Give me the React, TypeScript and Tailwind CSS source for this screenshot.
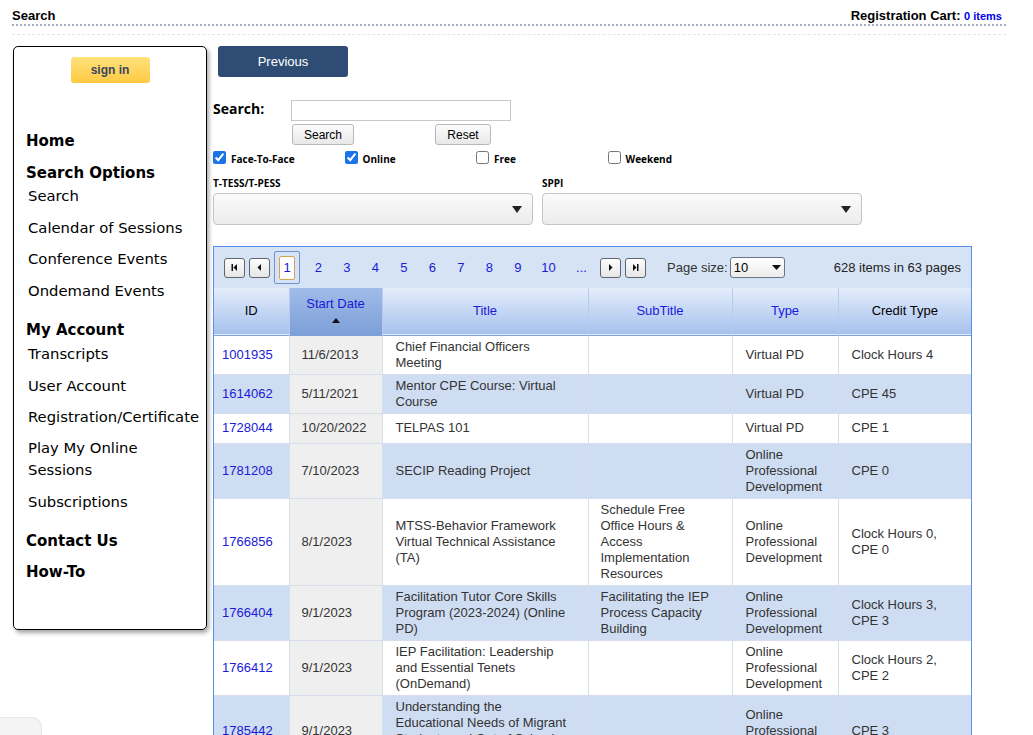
const rows = [
  { id: "1001935", date: "11/6/2013", title: "Chief Financial Officers Meeting", sub: "", type: "Virtual PD", credit: "Clock Hours 4" },
  { id: "1614062", date: "5/11/2021", title: "Mentor CPE Course: Virtual Course", sub: "", type: "Virtual PD", credit: "CPE 45" },
  { id: "1728044", date: "10/20/2022", title: "TELPAS 101", sub: "", type: "Virtual PD", credit: "CPE 1" },
  { id: "1781208", date: "7/10/2023", title: "SECIP Reading Project", sub: "", type: "Online Professional Development", credit: "CPE 0" },
  { id: "1766856", date: "8/1/2023", title: "MTSS-Behavior Framework Virtual Technical Assistance (TA)", sub: "Schedule Free Office Hours & Access Implementation Resources", type: "Online Professional Development", credit: "Clock Hours 0, CPE 0" },
  { id: "1766404", date: "9/1/2023", title: "Facilitation Tutor Core Skills Program (2023-2024) (Online PD)", sub: "Facilitating the IEP Process Capacity Building", type: "Online Professional Development", credit: "Clock Hours 3, CPE 3" },
  { id: "1766412", date: "9/1/2023", title: "IEP Facilitation: Leadership and Essential Tenets (OnDemand)", sub: "", type: "Online Professional Development", credit: "Clock Hours 2, CPE 2" },
  { id: "1785442", date: "9/1/2023", title: "Understanding the Educational Needs of Migrant Students and Out of School Youth (OSY)", sub: "", type: "Online Professional Development", credit: "CPE 3" },
];

function PagerBtn({ kind }: { kind: "first" | "prev" | "next" | "last" }) {
  return (
    <div className="w-[21px] h-[20px] border border-[#5d6670] rounded-[3px] bg-gradient-to-b from-[#fdfdfd] to-[#e6e6e6] flex items-center justify-center">
      <svg width="9" height="9" viewBox="0 0 9 9">
        {kind === "first" && (<><rect x="1.5" y="1" width="1.5" height="7" fill="#111" /><path d="M7 1 L3.5 4.5 L7 8 Z" fill="#111" /></>)}
        {kind === "prev" && <path d="M6 1 L2.5 4.5 L6 8 Z" fill="#111" />}
        {kind === "next" && <path d="M3 1 L6.5 4.5 L3 8 Z" fill="#111" />}
        {kind === "last" && (<><path d="M2 1 L5.5 4.5 L2 8 Z" fill="#111" /><rect x="6" y="1" width="1.5" height="7" fill="#111" /></>)}
      </svg>
    </div>
  );
}

function FakeSelect({ w }: { w: string }) {
  return (
    <div className={`${w} h-[32px] border border-[#c4c4c4] rounded-[4px] bg-gradient-to-b from-[#fbfbfb] to-[#ececec] flex items-center justify-end pr-[10px]`}>
      <svg width="10" height="7" viewBox="0 0 10 7"><path d="M0 0 H10 L5 7 Z" fill="#222" /></svg>
    </div>
  );
}

export default function App() {
  const arial = { fontFamily: '"Liberation Sans", Arial, sans-serif' };
  return (
    <div className="relative min-h-screen bg-white text-black" style={arial}>
      {/* header */}
      <div className="ml-[12px] w-[995px] pt-[7px]">
        <div className="flex justify-between items-end h-[15px] pr-[5px]">
          <span className="text-[13px] font-bold leading-none">Search</span>
          <span className="text-[13px] font-bold leading-none">
            Registration Cart: <span className="text-[11px] text-[#0000ee]">0 items</span>
          </span>
        </div>
        <div className="mt-[2px] border-t-2 border-dotted border-[#a3acbf] w-[994px]" />
        <div className="mt-[8px] border-t border-dashed border-[#e2e5ea] w-[994px]" />
      </div>

      <div className="flex ml-[13px] mt-[11px] gap-[6px]">
        {/* sidebar */}
        <div
          className="w-[194px] h-[584px] border border-black rounded-[5px] shadow-[2px_3px_4px_rgba(0,0,0,0.35)] shrink-0"
          style={{ fontFamily: '"DejaVu Sans", Verdana, sans-serif' }}
        >
          <div className="flex justify-center pt-[10px]">
            <div className="w-[79px] h-[26px] rounded-[3px] bg-gradient-to-b from-[#ffe27a] to-[#fec93f] flex items-center justify-center text-[12px] font-bold text-[#3a4660]" style={arial}>
              sign in
            </div>
          </div>
          <div className="pl-[12px] pt-[49px]">
            <div className="text-[15px] font-bold leading-[18px]">Home</div>
            <div className="text-[15px] font-bold leading-[18px] mt-[14px]">Search Options</div>
            <div className="pl-[2px] text-[14.8px] leading-[19.5px]">
              <div className="mt-[4px]">Search</div>
              <div className="mt-[12px]">Calendar of Sessions</div>
              <div className="mt-[12px]">Conference Events</div>
              <div className="mt-[12px]">Ondemand Events</div>
            </div>
            <div className="text-[15px] font-bold leading-[18px] mt-[21px]">My Account</div>
            <div className="pl-[2px] text-[14.8px] leading-[19.5px]">
              <div className="mt-[5px]">Transcripts</div>
              <div className="mt-[12px]">User Account</div>
              <div className="mt-[12px] whitespace-nowrap">Registration/Certificate</div>
              <div className="mt-[10px] leading-[22px]">Play My Online<br />Sessions</div>
              <div className="mt-[11px]">Subscriptions</div>
            </div>
            <div className="text-[15px] font-bold leading-[18px] mt-[21px]">Contact Us</div>
            <div className="text-[15px] font-bold leading-[18px] mt-[13px]">How-To</div>
          </div>
        </div>

        {/* main */}
        <div className="flex flex-col">
          <div className="ml-[5px] w-[130px] h-[31px] rounded-[3px] bg-[#2f4d74] text-white text-[13px] flex items-center justify-center">
            Previous
          </div>

          <div className="flex items-start mt-[23px]" style={{ fontFamily: '"Open Sans", sans-serif' }}>
            <span className="text-[14px] font-bold w-[78px] leading-[20px] mt-[-1px]">Search:</span>
            <div className="w-[220px] h-[21px] border border-[#c8c8c8]" />
          </div>
          <div className="flex mt-[3px] ml-[79px] gap-[81px]">
            <div className="w-[62px] h-[21px] border border-[#b8b8b8] rounded-[3px] bg-gradient-to-b from-[#fcfcfc] to-[#e8e8e8] text-[12px] flex items-center justify-center">Search</div>
            <div className="w-[56px] h-[21px] border border-[#b8b8b8] rounded-[3px] bg-gradient-to-b from-[#fcfcfc] to-[#e8e8e8] text-[12px] flex items-center justify-center">Reset</div>
          </div>

          <div className="flex mt-[3px] text-[10px] font-bold" style={{ fontFamily: '"Open Sans", sans-serif' }}>
            {[
              ["Face-To-Face", true],
              ["Online", true],
              ["Free", false],
              ["Weekend", false],
            ].map(([label, on]) => (
              <label key={label as string} className="w-[131.5px] flex items-center gap-[5px]">
                <input type="checkbox" defaultChecked={on as boolean} className="w-[13px] h-[13px] m-0 accent-[#1a73e8]" />
                <span className="mt-[4px]">{label as string}</span>
              </label>
            ))}
          </div>

          <div className="flex mt-[9px] gap-[9px]" style={{ fontFamily: '"Open Sans", sans-serif' }}>
            <div>
              <div className="text-[10px] font-bold leading-[14px]">T-TESS/T-PESS</div>
              <div className="mt-[3px]"><FakeSelect w="w-[320px]" /></div>
            </div>
            <div>
              <div className="text-[10px] font-bold leading-[14px]">SPPI</div>
              <div className="mt-[3px]"><FakeSelect w="w-[320px]" /></div>
            </div>
          </div>

          {/* grid */}
          <div className="mt-[21px] w-[759px] border border-[#5b8fe8] border-b-0">
            <div className="h-[41px] bg-[#d6e3f4] flex items-center pl-[10px] pr-[10px] text-[13px]">
              <div className="flex gap-[4px]">
                <PagerBtn kind="first" />
                <PagerBtn kind="prev" />
              </div>
              <div className="ml-[4px] w-[26px] h-[33px] border border-[#6a93d0] rounded-[2px] flex items-center justify-center">
                <div className="w-[16px] h-[24px] bg-white border border-[#d9a050] rounded-[2px] flex items-center justify-center text-[#1a1ad8] text-[13px]">1</div>
              </div>
              <div className="flex text-[#1a1ad8] ml-[4px]">
                {["2", "3", "4", "5", "6", "7", "8", "9"].map((n) => (
                  <span key={n} className="w-[28.5px] text-center">{n}</span>
                ))}
                <span className="w-[33px] text-center">10</span>
                <span className="w-[33px] text-center">...</span>
              </div>
              <div className="flex gap-[4px] ml-[2px]">
                <PagerBtn kind="next" />
                <PagerBtn kind="last" />
              </div>
              <span className="ml-[21px] text-[#333]">Page size:</span>
              <div className="ml-[2px] w-[55px] h-[21px] border border-[#6a7585] rounded-[3px] bg-gradient-to-b from-white to-[#ececec] flex items-center justify-between px-[3px]">
                <span>10</span>
                <svg width="9" height="5" viewBox="0 0 9 5"><path d="M0 0 H9 L4.5 5 Z" fill="#111" /></svg>
              </div>
              <span className="ml-auto text-[#222]">628 items in 63 pages</span>
            </div>

            <table className="w-full border-collapse text-[13px] leading-[16px] text-[#333] table-fixed">
              <colgroup>
                <col className="w-[75px]" />
                <col className="w-[93px]" />
                <col className="w-[206px]" />
                <col className="w-[144px]" />
                <col className="w-[106px]" />
                <col />
              </colgroup>
              <thead>
                <tr className="h-[47px] bg-gradient-to-b from-[#e4edfb] to-[#a6c1ed] border-b border-[#7ea2dc]">
                  <th className="font-normal text-black border-r border-[#b7cbea]">ID</th>
                  <th className="font-normal text-[#1a1ad8] border-r border-[#b7cbea] bg-gradient-to-b from-[#9fbbe8] to-[#7d9fd8]">
                    <div className="mt-[-4px]">Start Date</div>
                    <svg className="mx-auto mt-[6px]" width="8" height="5" viewBox="0 0 8 5"><path d="M0 5 H8 L4 0 Z" fill="#111" /></svg>
                  </th>
                  <th className="font-normal text-[#1a1ad8] border-r border-[#b7cbea]">Title</th>
                  <th className="font-normal text-[#1a1ad8] border-r border-[#b7cbea]">SubTitle</th>
                  <th className="font-normal text-[#1a1ad8] border-r border-[#b7cbea]">Type</th>
                  <th className="font-normal text-black">Credit Type</th>
                </tr>
              </thead>
              <tbody>
                {rows.map((r, i) => {
                  const alt = i % 2 === 1;
                  const bg = alt ? "bg-[#cfddf2]" : "bg-white";
                  return (
                    <tr key={r.id} className={`${bg} border-b border-[#d6deeb]`}>
                      <td className="h-[30px] px-[8px] py-[3px] text-[#1a1ad8] border-r border-[#d6deeb]">{r.id}</td>
                      <td className="px-[12px] py-[3px] bg-[#efefef] border-r border-[#d6deeb]">{r.date}</td>
                      <td className="pl-[13px] pr-[17px] py-[3px] border-r border-[#d6deeb]">{r.title}</td>
                      <td className="px-[12px] py-[3px] border-r border-[#d6deeb]">{r.sub}</td>
                      <td className="px-[13px] py-[3px] border-r border-[#d6deeb]">{r.type}</td>
                      <td className="px-[13px] py-[3px]">{r.credit}</td>
                    </tr>
                  );
                })}
              </tbody>
            </table>
          </div>
        </div>
      </div>

      {/* faint scroll widget at bottom-left */}
      <div className="fixed left-0 bottom-0 w-[42px] h-[18px] rounded-tr-[10px] bg-[#f4f4f4] border-t border-r border-[#e6e6e6]" />
    </div>
  );
}
